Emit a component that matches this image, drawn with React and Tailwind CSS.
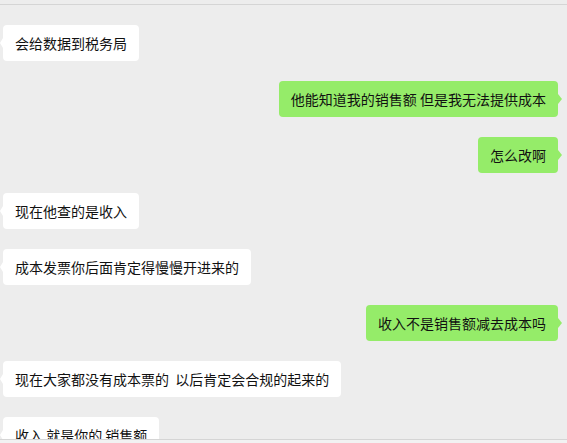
import React from "react";

const messages = [
  { from: "them", text: "会给数据到税务局" },
  { from: "me", text: "他能知道我的销售额 但是我无法提供成本" },
  { from: "me", text: "怎么改啊" },
  { from: "them", text: "现在他查的是收入" },
  { from: "them", text: "成本发票你后面肯定得慢慢开进来的" },
  { from: "me", text: "收入不是销售额减去成本吗" },
  { from: "them", text: "现在大家都没有成本票的  以后肯定会合规的起来的" },
  { from: "them", text: "收入 就是你的 销售额" },
];

const Bubble = ({ from, text }) => {
  const mine = from === "me";
  return (
    <div className={mine ? "flex justify-end" : "flex justify-start"}>
      <div
        className={
          "relative h-9 shrink-0 rounded-[4px] px-3 flex items-center text-[14px] text-[#111] whitespace-pre " +
          (mine ? "bg-[#95ec69]" : "bg-white")
        }
      >
        {text}
        {/* little tail */}
        {mine ? (
          <span className="absolute right-[-4px] top-[13px] w-0 h-0 border-y-[5px] border-y-transparent border-l-[4px] border-l-[#95ec69]" />
        ) : (
          <span className="absolute left-[-3px] top-[13px] w-0 h-0 border-y-[5px] border-y-transparent border-r-[3px] border-r-white" />
        )}
      </div>
    </div>
  );
};

export default function App() {
  return (
    <div
      className="w-[567px] h-[443px] flex flex-col overflow-hidden bg-[#ededed]"
      style={{ fontFamily: '"Noto Sans CJK SC", "Noto Sans", sans-serif' }}
    >
      <div className="h-1 shrink-0" />
      <div className="h-px shrink-0 bg-[#d5d5d5]" />
      <div className="flex-1 min-h-0 overflow-hidden flex flex-col gap-5 pt-5 pl-[3px] pr-[9px]">
        {messages.map((m, i) => (
          <Bubble key={i} from={m.from} text={m.text} />
        ))}
      </div>
      <div className="h-px shrink-0 bg-[#d5d5d5]" />
      <div className="h-[3px] shrink-0 bg-[#f2f2f2]" />
    </div>
  );
}
